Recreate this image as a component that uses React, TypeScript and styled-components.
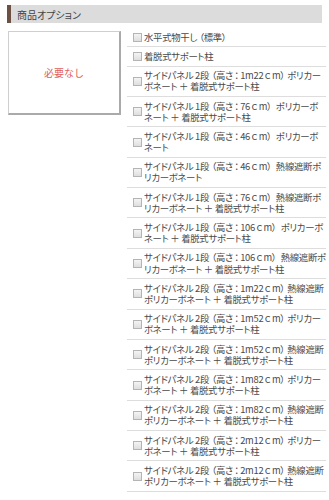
import React from "react";
import styled, { createGlobalStyle, css } from "styled-components";

const GlobalStyle = createGlobalStyle`
  html, body {
    margin: 0;
    padding: 0;
    background: #ffffff;
  }
  body {
    font-family: "Noto Sans CJK JP", "Noto Sans", "Liberation Sans", sans-serif;
    color: #444;
  }
`;

const Page = styled.div`
  padding: 5px 0 0 7px;
  width: 322px;
  box-sizing: border-box;
`;

const SectionHeader = styled.h2`
  margin: 0;
  height: 18px;
  display: flex;
  align-items: center;
  background: #dcdcdc;
  border-left: 4px solid #6c5043;
  padding-left: 6px;
  font-size: 10px;
  font-weight: normal;
  color: #444;
  font-feature-settings: "palt";
`;

const Content = styled.div`
  display: flex;
  align-items: flex-start;
  gap: 6px;
  margin: 5px 5px 0 0;
`;

const ImageBox = styled.div`
  flex: 0 0 auto;
  width: 110px;
  height: 81px;
  margin: 3px 0 0 1px;
  border: 1px solid #cfcfcf;
  border-right: 2px solid #aaaaaa;
  border-bottom: 2px solid #aaaaaa;
  display: flex;
  align-items: center;
  justify-content: center;
  font-size: 10px;
  color: #e0605c;
`;

const OptionList = styled.ul`
  flex: 1;
  list-style: none;
  margin: 0;
  padding: 0;
`;

const OptionRow = styled.li`
  display: flex;
  align-items: center;
  gap: 2px;
  padding: 3.6px 0 3.6px 6px;
  border-bottom: 1px solid #dddddd;
`;

const Checkbox = styled.span`
  flex: 0 0 auto;
  width: 7px;
  height: 7px;
  border: 1px solid #b4b4b4;
  background: linear-gradient(#f4f4f4, #dedede);
`;

const OptionText = styled.span`
  font-size: 9.4px;
  line-height: 11.1px;
  letter-spacing: -0.3px;
  color: #4a4a4a;
  white-space: nowrap;
  font-feature-settings: "palt";
`;

type Side = "open" | "close" | "mid";

const Punct = styled.span<{ $side: Side }>`
  ${({ $side }) =>
    $side === "open"
      ? css`
          margin-left: 2.4px;
        `
      : $side === "close"
      ? css`
          margin-right: 2.6px;
        `
      : css`
          margin: 0 1.4px;
        `}
`;

const SPLIT = /([（）：ｃ])/;

function sideOf(ch: string): Side {
  if (ch === "（") return "open";
  if (ch === "）") return "close";
  return "mid";
}

function renderLine(text: string) {
  return text.split(SPLIT).map((part, k) =>
    part.length === 1 && SPLIT.test(part) ? (
      <Punct key={k} $side={sideOf(part)}>
        {part}
      </Punct>
    ) : (
      <React.Fragment key={k}>{part}</React.Fragment>
    )
  );
}

const options: string[][] = [
  ["水平式物干し（標準）"],
  ["着脱式サポート柱"],
  ["サイドパネル 2段（高さ：1m22ｃm）ポリカー", "ボネート ＋ 着脱式サポート柱"],
  ["サイドパネル 1段（高さ：76ｃm） ポリカーボ", "ネート ＋ 着脱式サポート柱"],
  ["サイドパネル 1段（高さ：46ｃm） ポリカーボ", "ネート"],
  ["サイドパネル 1段（高さ：46ｃm） 熱線遮断ポ", "リカーボネート"],
  ["サイドパネル 1段（高さ：76ｃm） 熱線遮断ポ", "リカーボネート ＋ 着脱式サポート柱"],
  ["サイドパネル 1段（高さ：106ｃm） ポリカーボ", "ネート ＋ 着脱式サポート柱"],
  ["サイドパネル 1段（高さ：106ｃm） 熱線遮断ポ", "リカーボネート ＋ 着脱式サポート柱"],
  ["サイドパネル 2段（高さ：1m22ｃm）熱線遮断", "ポリカーボネート ＋ 着脱式サポート柱"],
  ["サイドパネル 2段（高さ：1m52ｃm）ポリカー", "ボネート ＋ 着脱式サポート柱"],
  ["サイドパネル 2段（高さ：1m52ｃm）熱線遮断", "ポリカーボネート ＋ 着脱式サポート柱"],
  ["サイドパネル 2段（高さ：1m82ｃm）ポリカー", "ボネート ＋ 着脱式サポート柱"],
  ["サイドパネル 2段（高さ：1m82ｃm）熱線遮断", "ポリカーボネート ＋ 着脱式サポート柱"],
  ["サイドパネル 2段（高さ：2m12ｃm）ポリカー", "ボネート ＋ 着脱式サポート柱"],
  ["サイドパネル 2段（高さ：2m12ｃm）熱線遮断", "ポリカーボネート ＋ 着脱式サポート柱"],
];

export default function App() {
  return (
    <>
      <GlobalStyle />
      <Page>
        <SectionHeader>商品オプション</SectionHeader>
        <Content>
          <ImageBox>必要なし</ImageBox>
          <OptionList>
            {options.map((lines, i) => (
              <OptionRow key={i}>
                <Checkbox />
                <OptionText>
                  {lines.map((l, j) => (
                    <React.Fragment key={j}>
                      {j > 0 && <br />}
                      {renderLine(l)}
                    </React.Fragment>
                  ))}
                </OptionText>
              </OptionRow>
            ))}
          </OptionList>
        </Content>
      </Page>
    </>
  );
}
